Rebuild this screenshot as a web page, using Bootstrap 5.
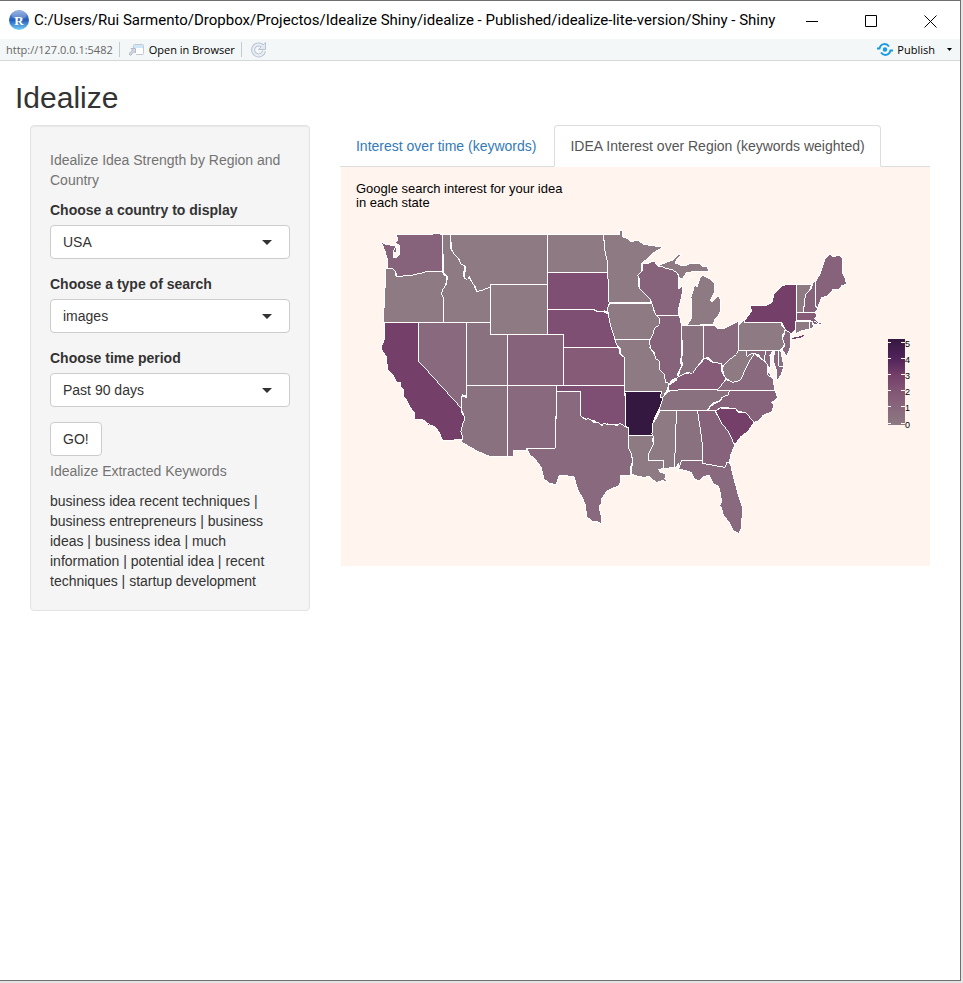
<!DOCTYPE html>
<html lang="en">
<head>
<meta charset="utf-8">
<meta name="viewport" content="width=device-width, initial-scale=1">
<title>Idealize</title>
<link href="https://cdn.jsdelivr.net/npm/bootstrap@5.3.0/dist/css/bootstrap.min.css" rel="stylesheet">
<style>
body{font:14px/20px "Liberation Sans",Arial,sans-serif;color:#333;background:#e4e4e4;padding:0 2px 2px 0}
.win{min-height:calc(100vh - 2px);background:#fff;border-top:1px solid #6f6f6f;border-right:1px solid #6f6f6f;border-bottom:1px solid #6f6f6f}
.ui{font-family:"Open Sans","Noto Sans",sans-serif;color:#000}
.titlebar{height:38px;padding-left:8px}
.titlebar .caption{font-family:Roboto,"Open Sans",sans-serif;font-size:15px;line-height:20px}
.winbtn{width:59px;height:38px;background:none;border:0;padding:0}
.toolbar{height:22px;background:#f3f7f7;border-bottom:1px solid #d3d9db;font-size:11px;line-height:16px;padding:0 8px 0 6px}
.toolbar a{color:#666;text-decoration:none}
.toolbar button{background:none;border:0;padding:0;color:#000}
.sep{width:1px;height:15px;background:#c5cacc;margin:0 8px 0 6px}
.page{padding:0 15px}
h1.app{font-size:30px;line-height:34px;margin:20px 0 10px;font-weight:400}
.page .row{--bs-gutter-x:30px;margin:0}
.well{background:#f5f5f5;border:1px solid #e3e3e3;border-radius:4px;padding:19px;box-shadow:inset 0 1px 1px rgba(0,0,0,.05)}
.help{color:#737373;margin:5px 0 10px}
.well label{font-weight:700;margin-bottom:5px;display:block}
.well .form-select{font-size:14px;line-height:20px;height:34px;padding:6px 36px 6px 12px;border-color:#ccc;border-radius:4px;color:#333;margin-bottom:15px;
 background-size:10px 5px;background-position:right 17px center;
 background-image:url("data:image/svg+xml,%3Csvg xmlns='http://www.w3.org/2000/svg' viewBox='0 0 10 5'%3E%3Cpath fill='%23333' d='M0 0h10L5 5z'/%3E%3C/svg%3E")}
.go{font-size:14px;line-height:20px;padding:6px 12px;border:1px solid #ccc;border-radius:4px;background:#fff;color:#333}
.nav-tabs{--bs-nav-tabs-border-color:#ddd}
.nav-tabs .nav-link{padding:10px 15px;border-radius:4px 4px 0 0;color:#337ab7;margin-right:2px}
.nav-tabs .nav-link.active{color:#555;border-color:#ddd #ddd #fff}
.plot{display:block;width:100%;height:auto;font-family:"Liberation Sans",Arial,sans-serif}
.states{stroke:#fff;stroke-width:1;shape-rendering:crispEdges}
.g0{fill:#8d7a82}.g1{fill:#8a7180}.g2{fill:#89697e}.g3{fill:#87627b}.g4{fill:#855b78}.g5{fill:#7f4e73}.g6{fill:#743f69}.g7{fill:#35183f}
</style>
</head>
<body>
<div class="win">
<header class="ui">
 <div class="titlebar d-flex align-items-center">
  <svg width="22" height="22" viewBox="0 0 22 22" aria-hidden="true"><defs><linearGradient id="ball" x2="0" y2="1"><stop stop-color="#7d9fdd"/><stop offset=".5" stop-color="#225cb8"/><stop offset="1" stop-color="#75d0fb"/></linearGradient></defs><circle cx="11" cy="11" r="10" fill="url(#ball)"/><ellipse cx="11" cy="6" rx="7.500" ry="4.500" fill="#fff" opacity=".22"/><text x="11" y="15.500" text-anchor="middle" font-family="Liberation Serif" font-size="13" font-weight="700" fill="#fff">R</text></svg>
  <div class="caption ms-1 me-auto text-nowrap">C:/Users/Rui Sarmento/Dropbox/Projectos/Idealize Shiny/idealize - Published/idealize-lite-version/Shiny - Shiny</div>
  <button class="winbtn" aria-label="Minimize"><svg width="13" height="13" stroke="#000" fill="none"><path d="M0 6.500h12"/></svg></button>
  <button class="winbtn" aria-label="Maximize"><svg width="13" height="13" stroke="#000" fill="none"><path d="M.5.5h11v11H.5z"/></svg></button>
  <button class="winbtn" aria-label="Close"><svg width="13" height="13" stroke="#000" fill="none"><path d="M.5.5l12 12m0-12l-12 12"/></svg></button>
 </div>
 <div class="toolbar d-flex align-items-center">
  <a href="http://127.0.0.1:5482">http://127.0.0.1:5482</a>
  <span class="sep"></span>
  <button class="d-flex align-items-center gap-1"><svg width="17" height="14" viewBox="0 0 17 14" fill="none" stroke="#c0c9d4"><path d="M5.500 6V2.500q0-1 1-1h8q1 0 1 1v8q0 1-1 1H8" fill="#fff"/><path d="M6 2h9v3H6z" fill="#cfe7f6" stroke="none"/><path d="M3 5.500h4.500V10L6 8.500 2.500 12.500l-1.500-1.500L4.500 7z" fill="#d5d9e0" stroke="#b0b9c5"/></svg><span>Open in Browser</span></button>
  <span class="sep"></span>
  <button aria-label="Refresh"><svg width="17" height="17" viewBox="0 0 17 17" fill="none"><path d="M12.500 5A5.500 5.500 0 1 0 14 10" stroke="#b9c3d2" stroke-width="4"/><path d="M15.500 1.500v7h-7l2.500-2.500z" fill="#e4eaf2" stroke="#b9c3d2"/><path d="M12.500 5A5.500 5.500 0 1 0 14 10" stroke="#e9eff5" stroke-width="2"/></svg></button>
  <button class="ms-auto d-flex align-items-center gap-1"><svg width="16" height="13" viewBox="0 0 16 13" fill="none" stroke="#1a9ae0" stroke-width="2"><circle cx="8" cy="6.500" r="2.200" fill="#1a9ae0" stroke="none"/><path d="M0 5.500h2.500C4 0 9.500 0 12 3.500M16 7.500h-2.500C12 13 6.500 13 4 9.500"/></svg><span>Publish</span><svg class="ms-2" width="5" height="3"><path d="M0 0h5L2.500 3z"/></svg></button>
 </div>
</header>
<main class="page">
 <h1 class="app">Idealize</h1>
 <div class="row">
  <div class="col-4">
   <form class="well">
    <p class="help">Idealize Idea Strength by Region and Country</p>
    <label for="country">Choose a country to display</label>
    <select class="form-select" id="country"><option>USA</option></select>
    <label for="kind">Choose a type of search</label>
    <select class="form-select" id="kind"><option>images</option></select>
    <label for="period">Choose time period</label>
    <select class="form-select" id="period"><option>Past 90 days</option></select>
    <button type="button" class="go d-block">GO!</button>
    <p class="help">Idealize Extracted Keywords</p>
    <div>business idea recent techniques | business entrepreneurs | business ideas | business idea | much information | potential idea | recent techniques | startup development</div>
   </form>
  </div>
  <div class="col-8">
   <ul class="nav nav-tabs">
    <li class="nav-item"><a class="nav-link" href="#time">Interest over time (keywords)</a></li>
    <li class="nav-item"><a class="nav-link active" aria-current="page" href="#region">IDEA Interest over Region (keywords weighted)</a></li>
   </ul>
   <svg class="plot" id="region" viewBox="340 167 590 399" role="img" aria-label="Google search interest by state">
    <defs><linearGradient id="scale" x2="0" y2="1"><stop stop-color="#35183f"/><stop offset=".22" stop-color="#50235a"/><stop offset=".42" stop-color="#743f69"/><stop offset=".62" stop-color="#835776"/><stop offset="1" stop-color="#8d7a82"/></linearGradient></defs>
    <path fill="#fff4ee" d="M341 167h589v399H341z"/>
    <g font-size="13" fill="#000"><text x="356" y="193">Google search interest for your idea</text><text x="356" y="207">in each state</text></g>
    <g class="states">
     <path class="g3" d="M381 242l4 2 5 1 6 1v6l-3 1v4l3 1 3-3 1-5-1-5-4-2 3-3-2-5 29-1 4 .5 8-1 5.500 1v37H427l-6 2-10 2.500-5-.5-3 1-6 .5-1-4-3-3-5-2-1-10-2-7z"/>
     <path class="g0" d="M387 268l6 1 2 2 1 5 2 1 5-1 3-1 5 .5 6-1.500 4-.5 6-2h15.500l2 4 2 1v4l-1 6-4 6 2 4v26H384l-1-9 1-5 1-20 1-19z"/>
     <path class="g0" d="M442.500 234.500h8V248l3 5 5 5 1 4 5 3-1 12 3 1 2-3 3 7 3 3 1 5 5-1 3-2h5l3-2v37.500h-48V298l-2-4 1-4 4-6 1-7-4-5z"/>
     <path class="g0" d="M450.500 234.500h97v50h-57v3l-5 1-3 2-6 1-1-5-3-3-3-7-2 3-3-1 1-12-5-3-1-4-5-5-3-5z"/>
     <path class="g0" d="M490.500 284.500h57v50h-57z"/>
     <path class="g6" d="M384 322.500h34.500V361L461 407l1 6 3 5v4l-2 4-1 5 1 3v5l-9 1-11.500.5-2-5-1-3-5-6-5-1-5-4-3-2H415l-1-7-5-7-3-6-3-4v-6l-2-2-1-5h-3l-4-7-5-5-1-6-1-8-4-6-1-3 3-7z"/>
     <path class="g2" d="M418.500 322.500h48V396l-4-1v4l-.5 10-43.500-48z"/>
     <path class="g1" d="M466.500 322.500h24v12h17v51h-41z"/>
     <path class="g1" d="M466.500 385.500h41v71h-17.500l-12-5-9-5-8-5 2-3-2-7 2-8 2-5-3-8v-14l5 1z"/>
     <path class="g3" d="M507.500 334.500h56v51h-56z"/>
     <path class="g2" d="M507.500 385.500h49l-1 63h-29v2h-13v6h-6z"/>
     <path class="g0" d="M547.500 234.500h56l1 12 2 8 2 9v9.500h-61z"/>
     <path class="g5" d="M547.500 272.500h61l-1 5 2 2.500v23l-1.500 3 .5 6-4-1-3 1-4-.5-4-2h-46z"/>
     <path class="g5" d="M547.500 309.500h45l4 2h6l6 3 3 9 2 5 1 8 3 6v5h-54v-13h-16z"/>
     <path class="g4" d="M563.500 347.500H617l3 2-1 4 5.500 4v28h-61z"/>
     <path class="g5" d="M556.500 385.500h68v6l1 8v28l-6-3.500-8 2-4-2-7 1-6-4-7-1-7-4v-24.500h-24z"/>
     <path class="g2" d="M556.500 391.500H580.500V416L586 420 588 418 593 422 599 423 602 426 604 423 608 425 613 424 617 426 620 423 624 426 628.500 428V448L631 453 632.500 461 631 466V476H625L620 476 621 482 618 486 611 489 607 491 602 498 601 504 599 507 601 515 602 524 598 522 592 521 587 517 585 504 582 497 578 490 574 477 568 476H559L556 485 549 483 544 479 541 467 535 459 530 455 526.500 448.500H555.500z"/>
     <path class="g0" d="M603.500 234.500H620v-4h2.500l.5 7 5 1 2 3 8-1 6 4 8 1 5 1 6 .5-10 6-6 6-5 4v8l-4 4 1 4-1 7 5 5 6 5 2 6.500h-42V280l-2-3 1-5-1-12-2-9z"/>
     <path class="g0" d="M609.500 303.500h43l1 7 6 6 2 3-1 5-5 5-1 5-3 5.500h-36l-4-11-3-13-1-8z"/>
     <path class="g0" d="M615 339.500h36l-1 8 4 6 2 5 4 3v7l5 5 1 6 3 4-2 7-2 3-1 4h-4l1-6h-36v-34l-5-4 1-4-4-4z"/>
     <path class="g7" d="M625 391.500h36.500l-1 6 3 .5-3 8-4 8-3 7-1 5 1 9.500h-25v-8l-3-1z"/>
     <path class="g0" d="M628.500 435.500h25l-1 5 2 5-5 8-1 7h15.500v8l-5 1 1 3 6 1-1 5 3 4-5-2-6 2-5-3-3-3-5 1-5-1-7-2V466L633 461 631 453 628.500 448z"/>
     <path class="g0" d="M660 410.500h16.500l-2 57-10.500 1-.5-8H648l1-7 4-8 1-7-2-5 1-10 4-6z"/>
     <path class="g1" d="M676.500 410.500h21l3 19 2 15v16h-21l1 8-3-1-1-4-2 4h-2z"/>
     <path class="g3" d="M697.500 410.500h19l-1 2 5 7 6 8 3 6 4 8 1 4-4 10-1 8-3-1-1 5-11-2-12-2v-18l-2-15z"/>
     <path class="g2" d="M681.500 460.500h21v3l12 2 11 2 1-5 4 1 2 10 6 22 4 12-1 21-3 5-5-3-4-8-6-7-2-8-2-2 2-3-1-9-2-7-5-3-4-8-6 1-4 4-5-1-3-7-6-2-6-1-2 3z"/>
     <path class="g1" d="M663 397.500l5-6 10-2H730l-2 6-6 2-3 4-5 1-4 4-3 4h-48z"/>
     <path class="g4" d="M668 391l1-6 8-5-2-4 8-3 5 1 5-6 7-4 5-6 7 4 9 1 1 9 4 7-5 7-4 4H678z"/>
     <path class="g3" d="M729.500 390.500H775l3 7-3 3-4 2 3 3-2 6-9 4-4 5-5 2-8-10-8-1-2-3-15-1-5 3-8-.5 3-4 5-3 4-2 3-4 5-2z"/>
     <path class="g6" d="M715.500 411l5-3 15 .5 2.500 3.500 8 .5 8 10-6 9-7 5-6 8-2-3-4-9-7-9-3-6z"/>
     <path class="g2" d="M717 390.500l9-11 7 3 6-4 4-8 3-6 4-4 4-7 4 3 4 3 6 5 1 8 4 6 2 12z"/>
     <path class="g0" d="M738.500 350.500h8v5l3-3 5 1-4 6-4 7-3 7-3 7-8 2-6-4-3-4-1-7 6-8 6-5z"/>
     <path class="g2" d="M746.500 350.500H773l-3 5 1 5-1 8-4-6-5-4-2-4-7-1-5 3zM775 351l4-.5 2 15.500h3l-3 9-5 7 1-11-2-5-2-7z"/>
     <path class="g1" d="M778 350.500l3 1 3 15h-5z"/>
     <path class="g0" d="M738.500 325l6-5v2.500H781l1 4 4 3.500-3 4-1 4 4 5-5 6-2 1.500h-40.500z"/>
     <path class="g2" d="M785 330l6 3-1 5 1 8-4 10-5-6 3-5-3-7 3-4z"/>
     <path class="g6" d="M744.500 321l7-10-1-5h15l7-4 1-8 9-8 4-1.500h10l.5 20 .5 8-1.500 17-5 4-6-4-3-7h-37z"/>
     <path class="g6" stroke="none" d="M791 339l4-2 6-1 3-1-1 2-4 1-6 1z"/>
     <path class="g0" d="M796.500 284.500h15l-2 6-4 4-1 8-1.500 10h-6z"/>
     <path class="g3" d="M811.500 288l2-7 2 2v23l2 3-3 3.500h-11l1-10 1-8 4-4z"/>
     <path class="g3" d="M815.500 306v-24l5-9 2-7 3-8 5-4 2 3 7-2 3 4v14l3 6 1 5-5 2-2 3-7 1-5 6-6 2-4 10z"/>
     <path class="g4" d="M797 312.500h18l2 3-2 3 3 4 4-.500-1 3-7-1-3-3h-14z"/>
     <path class="g0" d="M796 321.500h13.500v8l-8 1-5.500 3z"/>
     <path class="g1" d="M809.500 321.500h3l1 6-4 2z"/>
     <path class="g3" d="M656.500 315.500h23l2 10v30l-1 5 1 6-4 7 1 4-6 2-3 4-4-1-1-8-5-5v-8l-4-3-1-6-4-4-1-8 3-5 2-7 5-4v-6z"/>
     <path class="g1" d="M681.500 325.500h22v33l-3 4-4 5-4 6-5-1-9 4 1-5 3-6-1-7 1-4z"/>
     <path class="g2" d="M703.500 325.500H714l4 3h6l8-4 6.500-3v29l-2 4-7 5-7 7-1-3-8-1-5-5-5 1z"/>
     <path class="g3" d="M643 264l6-1 5-2 4 5 6 1 9 3 4 3 2 4v7l-1 5 5-3v3l-2 10-2 8v8.500h-23l-4-12-2-5-6-5-5-5 1-8-2-5 5-5z"/>
     <path class="g0" d="M660 265l7-3 6-2 5-5 4-1-5 5-2 4 5 2 5 1 4-2 6-1 5 1 3 3 5-1v3l2 3-7-1-5 1-5-1-3 2-3-1-4 6-3 1-2-5-5-4-8-2-5-2zM687 325.500l4-6 1-5v-10l-1-7 3-10 3-4v4l3-9 3-3 6 3 5 4 1 4-1 7-4 7 2 2 4-5 3-1 2 5v9l-3 6-3 3-2 5z"/>
     <path fill="none" d="M393 253l4-10M790 337h9M814 321l5 3M684 286l3-5 2-4 5-1M766 351l-2 8 4 7-1 8 6 5M776 391l2 10-5 2M818 327h3"/>
    </g>
    <path fill="url(#scale)" d="M888 339h17v86h-17z"/>
    <path stroke="#fff" d="M888 342.500h3m10 0h4M888 358.500h3m10 0h4M888 374.500h3m10 0h4M888 390.500h3m10 0h4M888 406.500h3m10 0h4M888 423.500h3m10 0h4"/>
    <g font-size="9" fill="#000"><text x="905" y="347">5</text><text x="905" y="363">4</text><text x="905" y="379">3</text><text x="905" y="395">2</text><text x="905" y="411">1</text><text x="905" y="428">0</text></g>
   </svg>
  </div>
 </div>
</main>
</div>
<script src="https://cdn.jsdelivr.net/npm/bootstrap@5.3.0/dist/js/bootstrap.bundle.min.js"></script>
</body>
</html>
